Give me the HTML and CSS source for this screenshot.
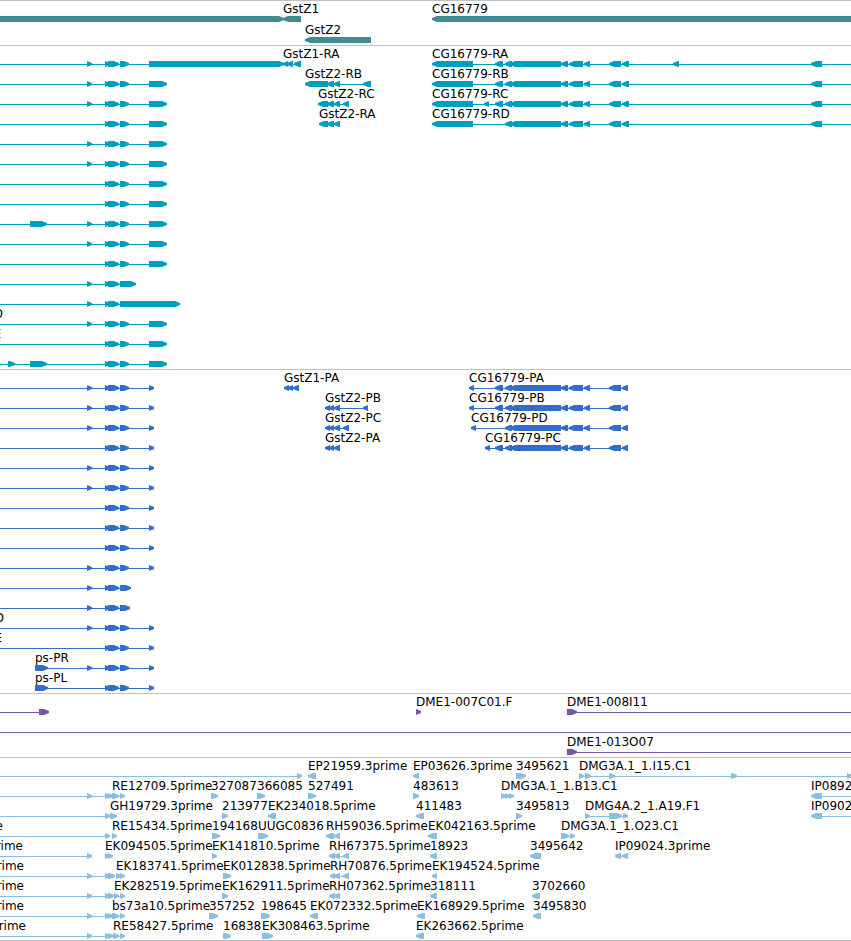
FILE: index.html
```
<!DOCTYPE html>
<html lang="en">
<head>
  <meta charset="UTF-8" />
  <meta name="viewport" content="width=device-width, initial-scale=1.0" />
  <title>Genome Browser | GstZ1, GstZ2, CG16779</title>
  <link rel="stylesheet" href="styles.css">
</head>
<body>
  <main class="browser">
    <section class="track genes" id="genes" aria-label="Genes"></section>
    <section class="track transcripts" id="transcripts" aria-label="Transcripts"></section>
    <section class="track proteins" id="proteins" aria-label="Proteins"></section>
    <section class="track bacs" id="bacs" aria-label="BACs"></section>
    <section class="track ests" id="ests" aria-label="ESTs"></section>
  </main>
  <script src="tracks.js"></script>
</body>
</html>
```

FILE: styles.css
```
body {
  margin: 0;
  background-color: #ffffff;
  color: #000000;
  font-family: "DejaVu Sans", sans-serif;
  font-size: 12px;
}

.browser {
  display: flex;
  flex-direction: column;
  border-bottom: 1px solid #c0c0c0;
}

.track {
  display: flex;
  flex-direction: column;
  padding: 1px 0 2px;
  border-top: 1px solid #c0c0c0;
}

.row {
  display: block;
  width: 100%;
  height: 20px;
  overflow: hidden;
}

.row text {
  fill: #000000;
}

.row line {
  stroke: currentColor;
  shape-rendering: crispEdges;
}

.row path {
  fill: currentColor;
}

.genes {
  gap: 1px;
  color: #3e8d94;
}

.transcripts {
  color: #009ebf;
}

.proteins {
  color: #326dcc;
}

.bacs {
  color: #7558a8;
}

.ests {
  padding-bottom: 1px;
  color: #8bbfdf;
}
```

FILE: tracks.js
```
// Each feature is [strand, label, exons].
// A * before or after the exons means it runs on past that edge of the view.
// Features with no strand are only the tail of a label, ending at the given x.

const ends = '105-110 108-119 120-129';
const exonsA = '* 87-92 ' + ends + ' 149-167';
const exonsB = '* ' + ends + ' 149-167';
const cdsA = '* 87-92 ' + ends + ' 149-154';
const cdsB = '* ' + ends + ' 149-154';

const cgMid = '505-512 510-561 561-568 569-583 584-590 609-621';
const cgTail = cgMid + ' 622-629';
const cgCds = cgMid + ' 622-628';

const tracks = {
  genes: [
    [['>', '', '* 0-284'], ['<', 'GstZ1', '283-301'], ['<', 'CG16779', '432-5000 *']],
    [['<', 'GstZ2', '305-371']]
  ],

  transcripts: [
    [['>', '', '* 87-92 ' + ends + ' 149-284'], ['<', 'GstZ1-RA', '283-288 287-293 294-301'],
     ['<', 'CG16779-RA', '432-473 495-503 ' + cgTail + ' 673-679 811-822 *']],
    [['>', '', exonsA], ['<', 'GstZ2-RB', '305-328 327-334 334-340 363-371'],
     ['<', 'CG16779-RB', '432-473 495-503 ' + cgTail + ' 811-822 *']],
    [['>', '', exonsA], ['<', 'GstZ2-RC', '318-328 327-334 334-340 343-349'],
     ['<', 'CG16779-RC', '432-473 484-489 495-503 ' + cgTail + ' 811-822 *']],
    [['>', '', exonsB], ['<', 'GstZ2-RA', '319-328 327-334 334-340'],
     ['<', 'CG16779-RD', '432-473 ' + cgTail + ' 811-822 *']],
    [['>', '', exonsA]],
    [['>', '', exonsA]],
    [['>', '', exonsB]],
    [['>', '', exonsB]],
    [['>', '', '* 30-47 87-92 ' + ends + ' 149-167']],
    [['>', '', exonsA]],
    [['>', '', exonsB]],
    [['>', '', '* 87-92 105-110 108-119 120-136']],
    [['>', '', '* 87-92 105-110 108-119 120-180']],
    [['', 'D', '3'], ['>', '', exonsA]],
    [['', 'E', '1'], ['>', '', exonsB]],
    [['>', '', '* 8-15 30-47 ' + ends + ' 149-167']]
  ],

  proteins: [
    [['>', '', cdsA], ['<', 'GstZ1-PA', '284-289 288-293 293-299'],
     ['<', 'CG16779-PA', '469-474 495-503 ' + cgCds]],
    [['>', '', cdsA], ['<', 'GstZ2-PB', '325-330 329-334 334-340 363-368'],
     ['<', 'CG16779-PB', '469-474 495-503 ' + cgCds]],
    [['>', '', cdsA], ['<', 'GstZ2-PC', '325-330 329-334 334-340 343-349'],
     ['<', 'CG16779-PD', '471-476 ' + cgCds]],
    [['>', '', cdsB], ['<', 'GstZ2-PA', '325-330 329-334 334-340'],
     ['<', 'CG16779-PC', '485-490 495-503 ' + cgCds]],
    [['>', '', cdsA]],
    [['>', '', cdsA]],
    [['>', '', cdsB]],
    [['>', '', cdsB]],
    [['>', '', cdsB]],
    [['>', '', cdsA]],
    [['>', '', '* 87-92 105-110 108-119 120-131']],
    [['>', '', '* 87-92 105-110 108-119 120-130']],
    [['', 'D', '4'], ['>', '', cdsA]],
    [['', 'E', '2'], ['>', '', cdsB]],
    [['>', 'ps-PR', '35-48 87-92 ' + ends + ' 149-154']],
    [['>', 'ps-PL', '35-48 ' + ends + ' 149-154']]
  ],

  bacs: [
    [['>', '', '* 39-49'], ['>', 'DME1-007C01.F', '416-421'], ['>', 'DME1-008I11', '567-577 *']],
    [['>', '', '* *']],
    [['>', 'DME1-013O07', '567-577 *']]
  ],

  ests: [
    [['>', '', '* 297-302'], ['<', 'EP21959.3prime', '308-316'], ['<', 'EP03626.3prime', '413-419'],
     ['>', '3495621', '516-526'], ['>', 'DMG3A.1_1.I15.C1', '579-584 585-591 609-615 731-737 847-852 *']],
    [['>', '', '* 87-92 105-110 108-113'], ['>', 'RE12709.5prime', '112-119 120-125'], ['>', '327087', '211-218'],
     ['>', '366085', '257-265'], ['>', '527491', '308-316'], ['>', '483613', '413-419'],
     ['>', 'DMG3A.1_1.B13.C1', '501-506 505-510 509-514'], ['<', 'IP08921.5prime', '811-822 *']],
    [['>', '', '* 105-110'], ['>', 'GH19729.3prime', '110-117'], ['>', '213977', '222-228'],
     ['<', 'EK234018.5prime', '268-276'], ['<', '411483', '416-424'], ['>', '3495813', '516-522'],
     ['>', 'DMG4A.2_1.A19.F1', '585-590 609-622 623-628'], ['<', 'IP09024.5prime', '811-822 *']],
    [['', 'prime', '3'], ['>', '', '* 105-110'], ['>', 'RE15434.5prime', '112-117'], ['>', '194168', '212-220'],
     ['>', 'UUGC0836', '258-268'], ['<', 'RH59036.5prime', '326-334 334-340'],
     ['<', 'EK042163.5prime', '428-437'], ['>', 'DMG3A.1_1.O23.C1', '561-569 570-575']],
    [['', 'prime', '23'], ['>', '', '* 87-92'], ['>', 'EK094505.5prime', '105-110 108-113'],
     ['>', 'EK141810.5prime', '212-217'], ['<', 'RH67375.5prime', '329-335 334-340 343-349'],
     ['<', '18923', '430-437'], ['<', '3495642', '530-541'], ['<', 'IP09024.3prime', '615-621 622-628']],
    [['', 'prime', '24'], ['>', '', '* 87-92 105-110 108-115'], ['>', 'EK183741.5prime', '116-121 120-125'],
     ['>', 'EK012838.5prime', '223-231'], ['<', 'RH70876.5prime', '330-335 334-340 343-349'],
     ['<', 'EK194524.5prime', '432-437']],
    [['', 'prime', '24'], ['>', '', '* 87-92 105-110 108-114'], ['>', 'EK282519.5prime', '114-119 120-125'],
     ['>', 'EK162911.5prime', '222-228'], ['<', 'RH07362.5prime', '329-335 334-340'],
     ['<', '318111', '430-437'], ['<', '3702660', '532-540']],
    [['', 'prime', '24'], ['>', '', '* 87-92 105-110 108-113'], ['>', 'bs73a10.5prime', '112-119 120-125'],
     ['>', '357252', '209-218'], ['>', '198645', '261-270'], ['<', 'EK072332.5prime', '310-318'],
     ['<', 'EK168929.5prime', '417-425'], ['<', '3495830', '533-541']],
    [['', 'prime', '26'], ['>', '', '* 87-92 105-110 108-113'], ['>', 'RE58427.5prime', '113-119 120-125'],
     ['>', '16838', '223-231'], ['>', 'EK308463.5prime', '262-273'], ['<', 'EK263662.5prime', '416-424']]
  ]
};

const TOP = 14;
const BOTTOM = 20;
const LINE = 17;
const BASELINE = 11;
const HEAD = 5;

function add(svg, tag, attrs, text) {
  const el = document.createElementNS('http://www.w3.org/2000/svg', tag);
  for (const name in attrs) {
    el.setAttribute(name, attrs[name]);
  }
  if (text) {
    el.textContent = text;
  }
  svg.appendChild(el);
}

// the head has a blunt tip, two pixels high
function drawExon(svg, strand, a, b) {
  const head = Math.min(HEAD, b - a);
  const tip = strand === '>' ? b : a;
  const back = strand === '>' ? a : b;
  const neck = strand === '>' ? b - head : a + head;
  add(svg, 'path', {
    d: `M${back} ${TOP}H${neck}L${tip} ${LINE - 1}V${LINE + 1}L${neck} ${BOTTOM}H${back}Z`
  });
}

function drawFeature(svg, [strand, label, exons]) {
  if (!strand) {
    add(svg, 'text', { x: exons, y: BASELINE, 'text-anchor': 'end' }, label);
    return;
  }

  const parts = exons.split(' ');
  const blocks = parts.filter(p => p !== '*').map(p => p.split('-').map(Number));
  const x1 = parts[0] === '*' ? 0 : blocks[0][0];
  const x2 = parts[parts.length - 1] === '*' ? '100%' : blocks[blocks.length - 1][1];

  add(svg, 'line', { x1, x2, y1: LINE + 0.5, y2: LINE + 0.5 });
  blocks.forEach(([a, b]) => drawExon(svg, strand, a, b));
  if (label) {
    add(svg, 'text', { x: x1, y: BASELINE }, label);
  }
}

for (const id in tracks) {
  const track = document.getElementById(id);
  tracks[id].forEach(features => {
    const svg = document.createElementNS('http://www.w3.org/2000/svg', 'svg');
    svg.setAttribute('class', 'row');
    features.forEach(f => drawFeature(svg, f));
    track.appendChild(svg);
  });
}
```
